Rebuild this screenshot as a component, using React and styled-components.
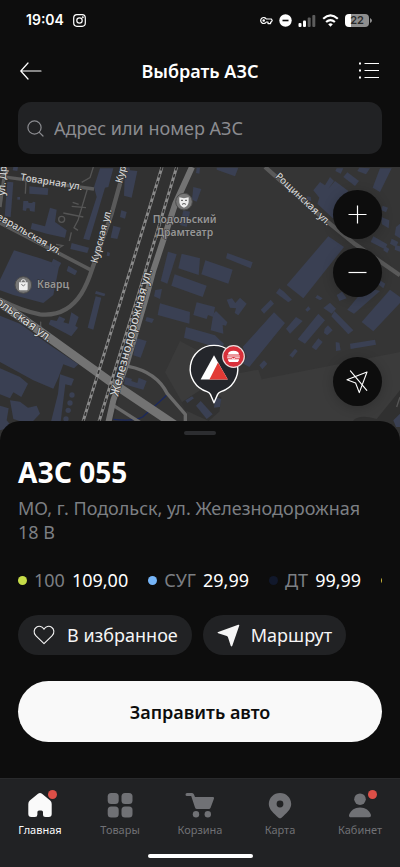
import React, {useState} from 'react';
import styled, {createGlobalStyle} from 'styled-components';

const GlobalStyle = createGlobalStyle`
	* {
		box-sizing: border-box;
	}
	body {
		margin: 0;
		background: #0d0d0d;
		color: #ffffff;
		font-family: "Noto Sans", "Open Sans", sans-serif;
	}
	button, input {
		font-family: inherit;
		color: inherit;
	}
	button {
		border: 0;
		padding: 0;
		cursor: pointer;
	}
	h1, h2, p, ul {
		margin: 0;
		padding: 0;
	}
`;

const Page = styled.div`
	min-height: 100vh;
	display: flex;
	flex-direction: column;
	background: #0d0d0d;
`;

const StatusBar = styled.div`
	height: 40px;
	padding: 0 28px 0 26px;
	display: flex;
	align-items: center;
	justify-content: space-between;
`;

const StatusGroup = styled.div`
	display: flex;
	align-items: center;
	gap: ${({$gap}) => $gap}px;
`;

const Time = styled.span`
	font-family: Inter, sans-serif;
	font-size: 14px;
	font-weight: 600;
	line-height: 20px;
`;

const Battery = styled.span`
	width: 24px;
	height: 13px;
	border-radius: 4px;
	background: linear-gradient(90deg, #ffffff 24%, #8e8e8e 24%);
	color: #2a2a2a;
	font-family: Inter, sans-serif;
	font-size: 11px;
	font-weight: 600;
	line-height: 13px;
	text-align: center;
`;

const Header = styled.header`
	height: 62px;
	padding: 0 20px;
	display: grid;
	grid-template-columns: 32px 1fr 32px;
	align-items: center;
`;

const HeaderTitle = styled.h1`
	font-size: 18px;
	font-weight: 600;
	line-height: 24px;
	text-align: center;
`;

const HeaderButton = styled.button`
	height: 32px;
	display: flex;
	align-items: center;
	justify-content: ${({$end}) => ($end ? 'flex-end' : 'flex-start')};
	background: none;
`;

const SearchField = styled.label`
	height: 52px;
	margin: 0 18px 13px;
	padding: 0 9px;
	display: flex;
	align-items: center;
	gap: 10px;
	border-radius: 13px;
	background: #212224;
	color: #8b8c90;
`;

const SearchInput = styled.input`
	flex: 1;
	min-width: 0;
	height: 100%;
	padding: 0;
	border: 0;
	outline: 0;
	background: none;
	font-size: 18px;

	&::placeholder {
		color: #8b8c90;
		opacity: 1;
	}
`;

const MapArea = styled.section`
	position: relative;
	flex: 1 0 278px;
	display: flex;
	overflow: hidden;
	background: #313131;
`;

const MapCanvas = styled.svg`
	position: absolute;
	inset: 0;
	width: 100%;
	height: 100%;
	font-family: "Noto Sans", sans-serif;
`;

const MapControls = styled.div`
	position: relative;
	margin-left: auto;
	padding: 23px 18px 39px 0;
	display: flex;
	flex-direction: column;
	gap: 9px;
`;

const RoundButton = styled.button`
	width: 49px;
	height: 49px;
	margin-top: ${({$last}) => ($last ? 'auto' : '0')};
	display: flex;
	align-items: center;
	justify-content: center;
	border-radius: 50%;
	background: #0d0d0d;
	box-shadow: 0 2px 12px rgba(0, 0, 0, 0.2);
`;

const StationPin = styled.button`
	position: absolute;
	left: 47%;
	top: 176px;
	width: 60px;
	height: 62px;
	background: none;
`;

const Sheet = styled.main`
	position: relative;
	margin-top: -24px;
	padding: 10px 18px 36px;
	display: flex;
	flex-direction: column;
	border-radius: 20px 20px 0 0;
	background: #0d0d0d;
`;

const Handle = styled.div`
	width: 32px;
	height: 4px;
	margin: 0 auto 20px;
	border-radius: 2px;
	background: #2c2d30;
`;

const StationName = styled.h2`
	font-size: 28px;
	font-weight: 700;
	line-height: 34px;
`;

const Address = styled.p`
	margin-top: 7px;
	color: #7c7f83;
	font-size: 18px;
	line-height: 24px;
`;

const FuelList = styled.ul`
	margin-top: 24px;
	display: flex;
	gap: 20px;
	overflow: hidden;
	list-style: none;
	font-size: 18px;
	line-height: 24px;
`;

const FuelItem = styled.li`
	flex: none;
	display: flex;
	align-items: center;
	gap: 7px;
`;

const FuelDot = styled.span`
	width: 9px;
	height: 9px;
	border-radius: 50%;
	background: ${({$color}) => $color};
`;

const FuelName = styled.span`
	color: #7c7f83;
`;

const Actions = styled.div`
	margin-top: 23px;
	display: flex;
	gap: 11px;
`;

const ActionButton = styled.button`
	height: 40px;
	padding: 0 14px;
	display: flex;
	align-items: center;
	gap: 11px;
	border-radius: 20px;
	background: #212224;
	color: #f5f5f5;
	font-size: 18px;
	white-space: nowrap;
`;

const PrimaryButton = styled.button`
	height: 61px;
	margin-top: 26px;
	border-radius: 31px;
	background: #f9f9f9;
	color: #0d0d0d;
	font-size: 18px;
	font-weight: 600;
`;

const BottomBar = styled.footer`
	padding: 13px 0 9px;
	border-top: 1px solid #292a2c;
	background: #212224;
`;

const Tabs = styled.nav`
	display: grid;
	grid-template-columns: repeat(5, 1fr);
`;

const Tab = styled.a`
	display: flex;
	flex-direction: column;
	align-items: center;
	gap: 4px;
	color: ${({$active}) => ($active ? '#fafafa' : '#707175')};
	font-size: 11px;
	line-height: 16px;
	text-decoration: none;
`;

const TabIcon = styled.span`
	position: relative;
	height: 26px;

	&::after {
		content: "";
		display: ${({$badge}) => ($badge ? 'block' : 'none')};
		position: absolute;
		top: -2px;
		right: -4px;
		width: 9px;
		height: 9px;
		border-radius: 50%;
		background: #dc4f47;
	}
`;

const HomeIndicator = styled.div`
	width: 105px;
	height: 4px;
	margin: 16px auto 0;
	border-radius: 2px;
	background: #ffffff;
`;

// city map geometry, in map units (three to a pixel on a phone)
const buildings = [
	'22,44 40,46 32,150 14,148', '88,58 145,64 143,84 88,80', '70,102 84,102 86,108 96,108 100,104 106,106 104,134 90,132 88,124 80,124 78,132 68,130',
	'150,122 170,128 165,165 200,190 195,212 140,200 92,186 96,168 135,178', '52,90 60,90 60,98 52,98', '40,0 54,0 52,12 38,10',
	'300,4 340,4 325,60 315,62 268,220 250,215 290,90 282,60', '375,4 388,0 390,10 412,12 395,92 372,86', '364,130 380,135 375,155 360,150',
	'340,176 362,182 352,216 332,212', '215,228 267,242 262,258 211,246', '42,250 120,274 178,294 160,384 130,408 40,384 0,370 0,338',
	'160,275 184,288 176,302 153,292', '205,296 232,312 225,325 200,312', '322,254 330,258 328,268 320,266', '288,372 316,380 313,388 285,380',
	'504,254 530,262 502,350 482,342', '545,260 600,274 596,324 535,304', '524,322 620,356 608,390 514,356', '580,60 604,66 590,104 576,98',
	'590,2 600,2 598,20 588,18', '550,130 570,134 560,180 540,174',
	'650,2 715,2 705,28 650,8', '940,70 960,45 975,55 990,30 1002,42 985,65 1005,42 1045,72 1015,105 1030,112 1000,155 952,110 958,92', '920,88 932,90 934,102 920,100',
	'1030,30 1042,16 1077,42 1065,57', '1010,4 1030,4 1022,20 1006,12', '1078,2 1110,4 1098,22 1072,12', '1140,4 1175,4 1140,75 1118,62',
	'985,208 1032,240 910,394 860,354', '682,258 758,286 752,304 678,274', '616,280 698,308 685,350 604,322',
	'1120,208 1162,232 1155,247 1112,225', '1155,238 1168,246 1162,258 1150,250', '1175,215 1195,225 1188,240 1170,230', '1148,116 1164,122 1158,136 1144,130',
	'1144,150 1168,160 1166,184 1146,172', '1188,180 1200,170 1200,214 1184,204', '1186,234 1200,238 1200,254 1184,248', '838,364 852,374 876,398 865,406 828,378',
	'680,398 696,394 706,408 720,392 740,410 715,445 704,438 708,424 690,422', '590,406 645,420 640,450 624,444 620,456 580,444', '640,440 648,432 682,466 678,476 668,474 670,500 632,490',
	'558,480 645,505 660,520 672,530 664,545 552,512', '822,436 855,468 748,600 730,590 740,568 728,540', '782,428 812,398 822,410 792,440', '858,485 888,450 908,462 870,500',
	'955,440 975,460 915,530 893,517', '990,407 1008,425 995,440 970,423', '1003,432 1060,490 1045,502 994,448', '1098,360 1140,372 1062,440 1042,428',
	'1170,368 1200,390 1200,408 1120,493 1085,465', '1050,530 1125,518 1128,533 1052,546', '1007,525 1018,527 1022,550 1008,552', '935,540 955,514 968,525 948,550',
	'974,485 984,475 998,490 982,505 972,498', '868,565 885,545 893,552 878,572', '778,595 792,580 802,590 787,607', '925,418 932,426 922,434 916,428',
	'952,384 968,394 960,400 946,392', '1010,384 1026,374 1040,394 1018,402', '1085,348 1110,330 1116,340 1096,358', '1140,340 1156,350 1150,364 1134,352',
	'0,446 60,470 150,535 235,592 222,604 190,592 175,632 160,665 100,640 0,585', '0,604 60,630 84,650 64,690 40,676 30,694 0,682', '30,700 60,704 84,722 110,716 120,740 90,772 40,756',
	'0,716 26,724 20,760 36,780 0,790', '180,622 222,636 214,656 196,652 180,780 150,776 174,680', '287,388 304,392 280,488 263,482',
	'152,458 170,462 178,448 196,456 190,466 206,470 214,436 236,450 226,476 234,482 214,508 146,472', '480,409 570,435 568,470 473,444', '466,369 486,366 480,396 462,388',
	'440,450 462,456 456,468 436,462', '410,514 440,522 422,572 400,565',
	'376,630 396,636 394,642 412,648 416,632 440,642 430,668 372,652', '556,700 576,688 582,694 562,708', '588,716 602,702 638,742 620,756',
	'646,690 664,696 660,720 642,722', '1180,760 1200,740 1200,780 1188,780',
];

const alleys = [
	'M78,40 L76,80', 'M245,46 L270,32 L280,0', 'M262,66 L234,160 L222,182 L234,190', 'M190,138 L250,150', 'M215,118 L258,122', 'M218,106 L236,112',
	'M168,232 L188,236 L172,246', 'M214,196 L208,222', 'M122,464 Q120,486 132,494', 'M1190,720 L1200,690',
];

function CityMap() {
	return (
		<MapCanvas viewBox="0 0 1200 834" preserveAspectRatio="xMidYMin slice" role="img" aria-label="Карта Подольска">
			<rect width="1200" height="834" fill="#313131" />
			<path d="M575,0 H1200 V834 H320 L440,384 Z" fill="#353535" />
			<path d="M540,522 L720,618 L775,608 L785,637 L1200,555 V834 H560 V730 L495,616 Z" fill="#3b3b3b" />
			<path d="M545,706 L600,670 L664,690 L658,734 L626,762 L556,730 Z" fill="#323232" />
			<path d="M1060,760 Q1080,740 1130,756 L1200,670 V834 H1060 Z" fill="#303030" />
			<g fill="#3a4053">
				{buildings.map((points) => <polygon key={points} points={points} />)}
				{[684, 708, 730, 756].map((y) => <circle key={y} cx={216 - (y - 684) / 4} cy={y} r="8" />)}
			</g>
			<g fill="none" stroke="#555555" strokeWidth="4">
				{alleys.map((d) => <path key={d} d={d} />)}
				<circle cx="185" cy="157" r="9" />
			</g>
			<path d="M340,757 Q400,764 428,750 L500,685" fill="none" stroke="#1a285f" strokeWidth="4" />
			<g fill="none" stroke="#5a5a5a" strokeLinejoin="round">
				<path d="M0,28 L282,66" strokeWidth="10" />
				<path d="M16,0 L0,120" strokeWidth="10" />
				<path d="M0,168 L140,240 L275,310" strokeWidth="11" />
				<path d="M374,0 L335,140 L275,310 Q262,350 244,380 Q200,450 120,442 Q70,434 0,398" strokeWidth="13" />
				<path d="M795,0 L960,146 L1066,232 L1200,325" strokeWidth="13" />
				<path d="M385,598 Q470,615 502,680 L556,742 V770" stroke="#6a6a6a" strokeWidth="10" />
				<path d="M340,715 L420,766" stroke="#6a6a6a" strokeWidth="10" />
			</g>
			<g fill="none" stroke="#737373">
				<path d="M576,0 L526,110 L460,310 L440,384 L380,590 L340,700 L322,780" strokeWidth="18" />
				<path d="M-10,400 L150,514 L340,650 L540,784" strokeWidth="26" />
			</g>
			{['M486,0 L369,380 L244,780', 'M530,0 L416,380 L292,780'].map((d) => (
				<g key={d} fill="none">
					<path d={d} stroke="#8a8a8a" strokeWidth="9" />
					<path d={d} stroke="#303030" strokeWidth="5" strokeDasharray="11 11" />
				</g>
			))}
			<g fill="#d2d2d2" stroke="#303030" strokeWidth="4" paintOrder="stroke" fontSize="30" fontWeight="500">
				<text transform="translate(60 40) rotate(9)">Товарная ул.</text>
				<text transform="translate(178 264) rotate(30)" textAnchor="end">Февральская ул.</text>
				<text transform="translate(292 290) rotate(-75)">Курская ул.</text>
				<text transform="translate(366 50) rotate(-76)">Курская ул.</text>
				<text transform="translate(14 86) rotate(-86)">ул. Дружбы</text>
				<text transform="translate(824 30) rotate(43)">Рощинская ул.</text>
				<text transform="translate(354 690) rotate(-75)" fontSize="36">Железнодорожная ул.</text>
				<text transform="translate(146 526) rotate(36)" fontSize="36" textAnchor="end">Подольская ул.</text>
			</g>
			<g fill="#969696" stroke="#303030" strokeWidth="3" paintOrder="stroke" fontSize="31" fontWeight="600">
				<text x="554" y="169" textAnchor="middle">Подольский</text>
				<text x="554" y="206" textAnchor="middle">Драмтеатр</text>
				<text x="111" y="364">Кварц</text>
			</g>
			<g transform="translate(552 104)">
				<circle r="25" fill="#777777" stroke="#4b4b4b" strokeWidth="3" />
				<path d="M-14,-13 Q0,-8 14,-13 V1 Q13,13 0,18 Q-13,13 -14,1 Z" fill="#eeeeee" />
				<path d="M-9,-4 H-3 M3,-4 H9 M-6,8 Q0,3 6,8" fill="none" stroke="#555555" strokeWidth="3" />
			</g>
			<g transform="translate(70 354)">
				<circle r="25" fill="#777777" stroke="#4b4b4b" strokeWidth="3" />
				<path d="M-13,-8 H13 V13 Q13,16 10,16 H-10 Q-13,16 -13,13 Z" fill="#eeeeee" />
				<path d="M-6,-8 V-11 Q-6,-16 0,-16 Q6,-16 6,-11 V-8" fill="none" stroke="#eeeeee" strokeWidth="3" />
				<path d="M-6,-2 Q0,7 6,-2" fill="none" stroke="#777777" strokeWidth="3" />
			</g>
		</MapCanvas>
	);
}

function PinDrawing() {
	return (
		<svg width="60" height="62" viewBox="0 0 60 62" aria-hidden="true">
			<path
				d="M26,2.4 A23.6,23.6 0 0 1 33,48.6 Q30.6,49.4 29.6,51.4 L26,59.8 L22.4,51.4 Q21.4,49.4 19,48.6 A23.6,23.6 0 0 1 26,2.4 Z"
				fill="#24262b" stroke="#ffffff" strokeWidth="1.4" strokeLinejoin="round"
			/>
			<path d="M26,12.3 L39.8,36.6 H12.6 Z" fill="#ffffff" />
			<path d="M30,19.4 L39.8,36.6 H21.4 Z" fill="#e23a35" />
			<circle cx="45.5" cy="13.5" r="10.8" fill="#d9303a" stroke="#ecdede" strokeWidth="1.2" />
			<path d="M40,11.4 Q40.2,7.8 45.5,7.8 Q50.8,7.8 51,11.4 Z M40,16.2 H51 Q51,19 48.7,19 H42.3 Q40,19 40,16.2 Z" fill="#ffffff" />
			<path d="M39.6,13 H51.4 M39.6,14.8 H43.6 L45.5,15.8 L47.4,14.8 H51.4" fill="none" stroke="#ffffff" strokeWidth="1" strokeLinecap="round" />
		</svg>
	);
}

function StatusIcons() {
	return (
		<StatusGroup $gap={6}>
			<svg width="13" height="9" viewBox="0 0 13 9" fill="none" stroke="#fff" strokeWidth="1.2" strokeLinejoin="round">
				<path d="M6.3,3 A3,3 0 1 0 6.3,6 H8 V7.6 H10.6 V6 H11.4 L12.2,4.5 L11.4,3 Z" />
				<circle cx="3.7" cy="4.5" r="0.7" />
			</svg>
			<svg width="13" height="13" viewBox="0 0 13 13">
				<circle cx="6.5" cy="6.5" r="6.2" fill="#fff" />
				<path d="M3.5,6.5 H9.5" stroke="#0d0d0d" strokeWidth="1.6" />
			</svg>
			<svg width="18" height="13" viewBox="0 0 18 13">
				<rect x="0.5" y="9" width="3" height="4" rx="1" fill="#fff" />
				<rect x="5" y="6.5" width="3" height="6.5" rx="1" fill="#fff" />
				<rect x="9.7" y="3.5" width="3" height="9.5" rx="1" fill="#5c5c5c" />
				<rect x="14.3" y="1" width="3" height="12" rx="1" fill="#5c5c5c" />
			</svg>
			<svg width="17" height="13" viewBox="0 0 17 13" fill="none" stroke="#fff" strokeWidth="2.2">
				<path d="M1.2,4.7 Q8.5,-1.8 15.8,4.7 M4.1,8 Q8.5,4.2 12.9,8" />
				<path d="M6.2,10.3 Q8.5,8.3 10.8,10.3 L8.5,12.7 Z" fill="#fff" stroke="none" />
			</svg>
			<StatusGroup $gap={1}>
				<Battery>22</Battery>
				<svg width="2" height="5" viewBox="0 0 2 5"><path d="M0,0 Q2,1 2,2.5 Q2,4 0,5 Z" fill="#8e8e8e" /></svg>
			</StatusGroup>
		</StatusGroup>
	);
}

const fuels = [
	{name: '100', price: '109,00', color: '#c6dc48'},
	{name: 'СУГ', price: '29,99', color: '#76b5f8'},
	{name: 'ДТ', price: '99,99', color: '#11182b'},
	{color: '#c9b53a'},
];

const tabs = [
	{
		label: 'Главная',
		badge: true,
		icon: <path d="M11,1.8 Q13,0.2 15,1.8 L23.2,8.6 Q24.7,10 24.7,12 V22 Q24.7,25 21.7,25 H18.5 Q16,25 16,22.5 V20 Q16,18.4 14.4,18.4 H12 Q10.4,18.4 10.4,20 V22.5 Q10.4,25 8,25 H4.3 Q1.3,25 1.3,22 V12 Q1.3,10 2.8,8.6 Z" />,
	},
	{
		label: 'Товары',
		icon: (
			<>
				<rect x="0.7" y="1" width="11" height="11" rx="3.5" />
				<rect x="14.5" y="1" width="11" height="11" rx="3.5" />
				<rect x="0.7" y="14.5" width="11" height="11" rx="3.5" />
				<rect x="14.5" y="14.5" width="11" height="11" rx="3.5" />
			</>
		),
	},
	{
		label: 'Корзина',
		icon: (
			<>
				<path d="M0,1 H5 Q6.5,1 7,2.5 L8,5 H26 Q27.5,5 27,6.5 L23.7,15.5 Q23.2,17 21.7,17 H10 Q8.5,17 8,15.5 L4.2,4 H0 Q-1.5,4 -1.5,2.5 Q-1.5,1 0,1 Z" />
				<circle cx="9" cy="22.3" r="3.2" />
				<circle cx="20.8" cy="22.3" r="3.2" />
			</>
		),
	},
	{
		label: 'Карта',
		icon: <path fillRule="evenodd" d="M13,1 C19.2,1 24.2,5.8 24.2,12 C24.2,17.5 19,21.5 14.5,25.7 Q13,27 11.5,25.7 C7,21.5 1.8,17.5 1.8,12 C1.8,5.8 6.8,1 13,1 Z M13,8.6 A3.4,3.4 0 1 0 13,15.4 A3.4,3.4 0 1 0 13,8.6 Z" />,
	},
	{
		label: 'Кабинет',
		badge: true,
		icon: (
			<>
				<circle cx="13" cy="7.2" r="5.8" />
				<path d="M2,23 C3.5,18.5 7.5,15.5 13,15.5 C18.5,15.5 22.5,18.5 24,23 Q24.3,25.3 22,25.3 H4 Q1.7,25.3 2,23 Z" />
			</>
		),
	},
];

export default function App() {
	const [query, setQuery] = useState('');
	const [activeTab, setActiveTab] = useState('Главная');

	return (
		<Page>
			<GlobalStyle />
			<StatusBar>
				<StatusGroup $gap={9}>
					<Time>19:04</Time>
					<svg width="13" height="13" viewBox="0 0 13 13" fill="none" stroke="#fff" strokeWidth="1.2">
						<rect x="0.7" y="0.7" width="11.6" height="11.6" rx="3.2" />
						<circle cx="6.5" cy="6.5" r="2.7" />
						<circle cx="9.8" cy="3.2" r="0.4" />
					</svg>
				</StatusGroup>
				<StatusIcons />
			</StatusBar>
			<Header>
				<HeaderButton type="button" aria-label="Назад">
					<svg width="22" height="18" viewBox="0 0 22 18" fill="none" stroke="#fff" strokeWidth="1.2" strokeLinecap="round" strokeLinejoin="round">
						<path d="M21,9 H0.8 M8,1 L0.8,9 L8,17" />
					</svg>
				</HeaderButton>
				<HeaderTitle>Выбрать АЗС</HeaderTitle>
				<HeaderButton type="button" $end aria-label="Показать списком">
					<svg width="21" height="18" viewBox="0 0 21 18" fill="none" stroke="#fff" strokeWidth="1.2">
						<path d="M5.5,1.5 H20 M5.5,8.5 H20 M5.5,15.5 H20" />
						<path d="M0,1.5 H2 M0,8.5 H2 M0,15.5 H2" strokeWidth="2" />
					</svg>
				</HeaderButton>
			</Header>
			<SearchField>
				<svg width="17" height="17" viewBox="0 0 17 17" fill="none" stroke="currentColor" strokeWidth="1.2" strokeLinecap="round">
					<circle cx="7.5" cy="7.5" r="6.6" />
					<path d="M12.3,12.3 L16,16" />
				</svg>
				<SearchInput
					type="text"
					aria-label="Адрес или номер АЗС"
					placeholder="Адрес или номер АЗС"
					value={query}
					onChange={(e) => setQuery(e.target.value)}
				/>
			</SearchField>

			<MapArea>
				<CityMap />
				<StationPin type="button" aria-label="АЗС 055">
					<PinDrawing />
				</StationPin>
				<MapControls>
					<RoundButton type="button" aria-label="Приблизить">
						<svg width="19" height="19" viewBox="0 0 19 19" stroke="#fff" strokeWidth="1.2"><path d="M9.5,0.5 V18.5 M0.5,9.5 H18.5" /></svg>
					</RoundButton>
					<RoundButton type="button" aria-label="Отдалить">
						<svg width="19" height="19" viewBox="0 0 19 19" stroke="#fff" strokeWidth="1.2"><path d="M0.5,9.5 H18.5" /></svg>
					</RoundButton>
					<RoundButton type="button" $last aria-label="Моё местоположение">
						<svg width="24" height="24" viewBox="0 0 24 24" fill="none" stroke="#fff" strokeWidth="1.1" strokeLinejoin="round" strokeLinecap="round">
							<path d="M21,2 L1,9.8 L9.6,13 L13.3,22.6 Z M4.4,0.8 L20.8,20.4" />
						</svg>
					</RoundButton>
				</MapControls>
			</MapArea>

			<Sheet>
				<Handle />
				<StationName>АЗС 055</StationName>
				<Address>МО, г. Подольск, ул. Железнодорожная 18 В</Address>
				<FuelList>
					{fuels.map(({name, price, color}) => (
						<FuelItem key={color}>
							<FuelDot $color={color} />
							{name ? <FuelName>{name}</FuelName> : null}
							{price ? <span>{price}</span> : null}
						</FuelItem>
					))}
				</FuelList>
				<Actions>
					<ActionButton type="button">
						<svg width="24" height="20" viewBox="0 0 24 20" fill="none" stroke="currentColor" strokeWidth="1.1" strokeLinejoin="round">
							<path d="M12,18.7 L3.8,10.6 C1.2,8 1.8,4 4.4,2.2 C7,0.5 10.3,1.3 12,4.2 C13.7,1.3 17,0.5 19.6,2.2 C22.2,4 22.8,8 20.2,10.6 Z" />
						</svg>
						В избранное
					</ActionButton>
					<ActionButton type="button">
						<svg width="23" height="23" viewBox="0 0 23 23" fill="currentColor">
							<path d="M21.2,0.8 Q22.6,0.4 22.2,1.8 L15.3,21.8 Q14.5,23.2 13.7,21.8 L10.9,13 Q10.6,12.2 9.8,11.9 L1.2,9.3 Q-0.2,8.6 1.2,7.9 Z" />
						</svg>
						Маршрут
					</ActionButton>
				</Actions>
				<PrimaryButton type="button">Заправить авто</PrimaryButton>
			</Sheet>

			<BottomBar>
				<Tabs>
					{tabs.map(({label, badge, icon}) => (
						<Tab
							key={label}
							href="#"
							$active={label === activeTab}
							onClick={(e) => {
								e.preventDefault();
								setActiveTab(label);
							}}
						>
							<TabIcon $badge={badge}>
								<svg width="26" height="26" viewBox="0 0 26 26" fill="currentColor" overflow="visible">{icon}</svg>
							</TabIcon>
							{label}
						</Tab>
					))}
				</Tabs>
				<HomeIndicator />
			</BottomBar>
		</Page>
	);
}
